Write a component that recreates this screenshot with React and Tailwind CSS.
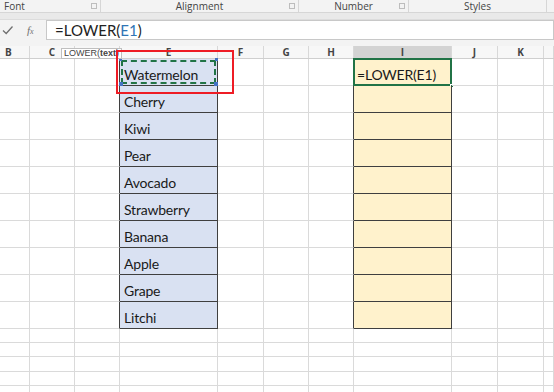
import React from "react";

const COLS = [
  { l: "B", w: 30 },
  { l: "C", w: 45 },
  { l: "", w: 45 },
  { l: "E", w: 98 },
  { l: "F", w: 46 },
  { l: "G", w: 45 },
  { l: "H", w: 45 },
  { l: "I", w: 98 },
  { l: "J", w: 46 },
  { l: "K", w: 46 },
  { l: "", w: 10 },
];

const FRUITS = ["Watermelon", "Cherry", "Kiwi", "Pear", "Avocado", "Strawberry", "Banana", "Apple", "Grape", "Litchi"];
const ROWS = [27, 27, 27, 27, 27, 27, 27, 27, 27, 27, 14, 14, 15, 14, 14];

const font = { fontFamily: "Lato, 'Open Sans', sans-serif" };

function Cell({ r, c }) {
  const inData = r < 10;
  const col = COLS[c].l;
  let cls = "relative border-r border-b border-[#dadada] ";
  let content = null;
  if (inData && col === "E") {
    cls = "relative flex items-end pl-[4px] pb-[2px] border-r border-b border-[#3f3f3f] bg-[#d9e1f2] ";
    content = (
      <span className="text-[14px] leading-[16px] tracking-[-0.2px] text-[#1a1a1a]">{FRUITS[r]}</span>
    );
  } else if (inData && (c === 2 || col === "H")) {
    cls = "relative border-b border-[#dadada] border-r border-r-[#3f3f3f] ";
  } else if (inData && col === "I") {
    cls = "relative flex items-end pl-[3px] pb-[2px] border-r border-b border-[#3f3f3f] bg-[#fff2cc] ";
  }
  return (
    <div className={cls}>
      {content}
      {inData && col === "E" && r === 0 && (
        <>
          <div className="absolute inset-[1px] border-2 border-dashed border-[#217346]" />
          <div className="absolute -left-[1px] -top-[1px] w-[3px] h-[3px] bg-[#4472c4]" />
          <div className="absolute -right-[1px] -top-[1px] w-[3px] h-[3px] bg-[#4472c4]" />
          <div className="absolute -left-[1px] -bottom-[1px] w-[4px] h-[4px] bg-[#4472c4]" />
          <div className="absolute -right-[1px] -bottom-[1px] w-[4px] h-[4px] bg-[#4472c4]" />
        </>
      )}
      {inData && col === "I" && r === 0 && (
        <>
          <span className="text-[14px] leading-[16px] tracking-[-0.2px] text-[#1a1a1a]">=LOWER(E1)</span>
          <div className="absolute -left-[1px] -top-[1px] -right-[1px] -bottom-[1px] border-2 border-[#217346]" />
          <div className="absolute -right-[3px] -bottom-[3px] w-[4px] h-[4px] bg-[#217346] border border-white" />
        </>
      )}
    </div>
  );
}

function Group({ label, width, launcher, align }) {
  return (
    <div className={`relative border-r border-[#d6d6d6] ${align}`} style={{ width }}>
      {label}
      {launcher && <span className="absolute right-[3px] top-[3px] w-[6px] h-[6px] border border-[#bdbdbd]" />}
    </div>
  );
}

export default function App() {
  const colTemplate = COLS.map((c) => `${c.w}px`).join(" ");
  return (
    <div className="w-[554px] h-[392px] overflow-hidden bg-white relative" style={font}>
      {/* Ribbon group labels */}
      <div className="h-[13px] bg-[#f3f3f3] border-b border-[#d6d6d6] flex text-[10px] text-[#444] leading-[12px]" style={{ fontFamily: "'Open Sans', sans-serif" }}>
        <Group label="Font" width={101} launcher align="pl-[4px]" />
        <Group label="Alignment" width={198} launcher align="text-center" />
        <Group label="Number" width={110} launcher align="text-center" />
        <Group label="Styles" width={138} align="text-center" />
        <div className="flex-1" />
      </div>
      <div className="h-[7px] bg-[#e9e9e9] border-b border-[#dcdcdc]" />
      {/* Formula bar */}
      <div className="h-[20px] bg-[#f3f3f3] flex">
        <div className="w-[46px] flex items-center pl-[2px] gap-[13px]">
          <svg width="12" height="10" viewBox="0 0 12 10">
            <path d="M1 5.5 L4.2 8.5 L10.5 1.5" fill="none" stroke="#707070" strokeWidth="1.3" />
          </svg>
          <span className="text-[11px] italic text-[#707070]" style={{ fontFamily: "'Liberation Serif', serif" }}>
            f<span className="text-[8px]">x</span>
          </span>
        </div>
        <div className="flex-1 bg-white border border-[#c8c8c8] flex items-center pl-[8px] text-[15px] text-[#222]">
          =LOWER(<span className="text-[#2f75b5]">E1</span>)
        </div>
      </div>
      <div className="h-[6px] bg-[#f3f3f3]" />
      {/* Column headers */}
      <div className="grid h-[13px] bg-[#f7f7f7] border-b border-[#cfcfcf]" style={{ gridTemplateColumns: colTemplate }}>
        {COLS.map((c, i) => (
          <div
            key={i}
            className={
              "border-r border-[#d8d8d8] text-[10px] font-bold leading-[12px] text-[#444] " +
              (c.l === "I" ? "bg-[#d3d3d3] text-[#2b5d3f] " : "") +
              (i === 0 ? "pl-[5px]" : "text-center")
            }
            style={{ fontFamily: "'Open Sans', sans-serif" }}
          >
            {c.l}
          </div>
        ))}
      </div>
      {/* Cells */}
      <div className="grid" style={{ gridTemplateColumns: colTemplate, gridTemplateRows: ROWS.map((h) => `${h}px`).join(" ") }}>
        {ROWS.map((_, r) => COLS.map((c, ci) => <Cell key={r + "-" + ci} r={r} c={ci} />))}
      </div>

      {/* Tooltip */}
      <div className="absolute left-[61px] top-[48px] h-[11px] px-[2px] bg-white border border-[#bfbfbf] text-[9px] leading-[9px] text-[#444] whitespace-nowrap" style={{ fontFamily: "'Liberation Sans', sans-serif" }}>
        LOWER(<span className="font-bold">text</span>)
      </div>
      {/* Red highlight box */}
      <div className="absolute left-[116px] top-[50px] w-[118px] h-[44px] border-2 border-[#ee1c25]" />
    </div>
  );
}
